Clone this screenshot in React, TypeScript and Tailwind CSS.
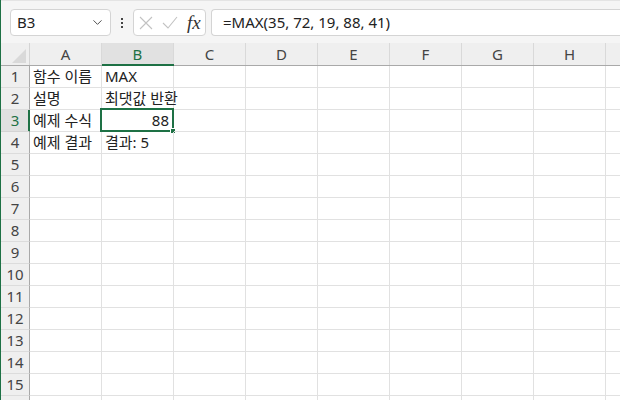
import { ChevronDown } from 'lucide-react'

const cols = ['A', 'B', 'C', 'D', 'E', 'F', 'G', 'H', 'I']

const cells: Record<string, string> = {
  A1: '함수 이름',
  B1: 'MAX',
  A2: '설명',
  B2: '최댓값 반환',
  A3: '예제 수식',
  B3: '88',
  A4: '예제 결과',
  B4: '결과: 5',
}

const font = { fontFamily: '"Noto Sans", "Noto Sans CJK KR", sans-serif' }

export default function App() {
  const rows = Array.from({ length: 16 }, (_, i) => i + 1)

  return (
    <div
      className="relative h-[400px] w-[620px] overflow-hidden border-l border-[#1e7145] bg-white text-[15px] text-[#222]"
      style={font}
    >
      {/* formula bar */}
      <div className="flex h-[43px] items-start border-t border-[#e4e4e4] bg-[#f5f5f5] pt-[8px]">
        <div className="ml-[9px] flex h-[27px] w-[101px] shrink-0 items-center justify-between rounded-[4px] border border-[#d4d4d4] bg-white pl-[6px] pr-[5px]">
          <span className="text-[#222]">B3</span>
          <ChevronDown size={15} strokeWidth={1.5} className="text-[#444]" />
        </div>
        <div className="flex h-[27px] w-[22px] shrink-0 items-center justify-center">
          <div className="flex flex-col gap-[2px]">
            <span className="block h-[2px] w-[2px] bg-[#444]" />
            <span className="block h-[2px] w-[2px] bg-[#444]" />
            <span className="block h-[2px] w-[2px] bg-[#444]" />
          </div>
        </div>
        <div className="flex h-[27px] w-[73px] shrink-0 items-center rounded-[4px] border border-[#d4d4d4] bg-white pl-[5px]">
          <svg width="14" height="14" viewBox="0 0 14 14" fill="none" stroke="#c2c2c2" strokeWidth="1.1">
            <path d="M1 1l12 12M13 1L1 13" />
          </svg>
          <svg width="16" height="13" viewBox="0 0 16 13" fill="none" stroke="#c2c2c2" strokeWidth="1.1" className="ml-[9px]">
            <path d="M1 7l5 5L15 1" />
          </svg>
          <span
            className="ml-[9px] text-[19px] italic leading-none text-[#333]"
            style={{ fontFamily: '"Liberation Serif", serif' }}
          >
            fx
          </span>
        </div>
        <div className="ml-[5px] flex h-[27px] flex-1 items-center rounded-l-[4px] border border-r-0 border-[#d4d4d4] bg-white pl-[11px]">
          =MAX(35, 72, 19, 88, 41)
        </div>
      </div>

      {/* column headers */}
      <div className="flex h-[23px] border-b border-[#a9a9a9] bg-[#efefef]">
        <div className="relative w-[29px] shrink-0 border-r border-[#d4d4d4]">
          <div
            className="absolute bottom-[2px] right-[3px] h-[14px] w-[14px] bg-[#d9d9d9]"
            style={{ clipPath: 'polygon(100% 0, 100% 100%, 0 100%)' }}
          />
        </div>
        {cols.map(c => (
          <div
            key={c}
            className={`flex w-[72px] shrink-0 items-center justify-center border-r border-[#d9d9d9] ${
              c === 'B' ? 'relative bg-[#e1e1e1] text-[#1e7145]' : 'text-[#444]'
            }`}
          >
            {c !== 'I' && c}
            {c === 'B' && <div className="absolute bottom-[-1px] left-0 right-[-1px] h-[2px] bg-[#1e7145]" />}
          </div>
        ))}
      </div>

      {/* grid rows */}
      {rows.map(r => (
        <div key={r} className="flex h-[22px]">
          <div
            className={`relative flex w-[29px] shrink-0 items-center justify-center border-b border-r ${
              r === 3
                ? 'border-b-[#d4d4d4] border-r-[#1e7145] bg-[#e1e1e1] text-[#1e7145]'
                : 'border-b-[#dcdcdc] border-r-[#a9a9a9] bg-[#efefef] text-[#444]'
            }`}
          >
            {r < 16 && r}
            {r === 3 && <div className="absolute bottom-0 right-[-1px] top-0 w-[2px] bg-[#1e7145]" />}
          </div>
          {cols.map(c => {
            const id = `${c}${r}`
            const v = cells[id]
            const selected = id === 'B3'
            return (
              <div
                key={id}
                className={`relative flex w-[72px] shrink-0 items-center whitespace-nowrap border-b border-r border-[#e1e1e1] px-[3px] ${
                  selected ? 'justify-end' : ''
                }`}
              >
                {v && <span className={selected ? 'pr-[1px]' : ''}>{v}</span>}
                {selected && (
                  <>
                    <div className="pointer-events-none absolute bottom-[-1px] left-[-2px] right-[-1px] top-[-2px] border-2 border-[#1e7145]" />
                    <div className="absolute bottom-[-3px] right-[-3px] h-[6px] w-[6px] border border-white bg-[#1e7145]" />
                  </>
                )}
              </div>
            )
          })}
        </div>
      ))}
    </div>
  )
}
